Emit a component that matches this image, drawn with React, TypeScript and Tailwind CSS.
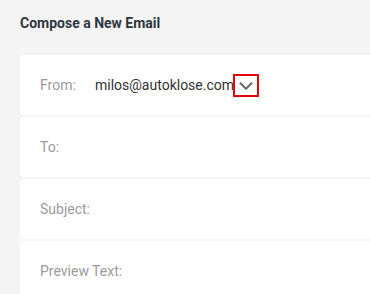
import { ChevronDown } from 'lucide-react';

const fields = ['To:', 'Subject:', 'Preview Text:'];

export default function App() {
  return (
    <div
      className="w-[370px] h-[294px] overflow-hidden bg-[#f4f4f4] pl-5 pt-[14px]"
      style={{ fontFamily: 'Roboto, "Liberation Sans", sans-serif' }}
    >
      <h1 className="text-[14px] font-bold text-[#2f3640] leading-[18px]">Compose a New Email</h1>

      <div className="mt-[23px] flex flex-col gap-[2px] w-[380px]">
        {/* From */}
        <div className="h-[60px] bg-white rounded-[4px] flex items-center pl-5">
          <span className="w-[55px] text-[14px] text-[#9b9b9b]">From:</span>
          <span className="text-[14px] text-[#333]">milos@autoklose.com</span>
          <span className="w-[26px] h-[23px] border-2 border-[#e8000b] flex items-center justify-center -ml-[1px]">
            <ChevronDown size={22} strokeWidth={2.4} className="text-[#6b6f75] mt-[2px]" />
          </span>
        </div>

        {fields.map((label) => (
          <div key={label} className="h-[60px] bg-white rounded-[4px] flex items-center pl-5">
            <span className="text-[14px] text-[#9b9b9b]">{label}</span>
          </div>
        ))}
      </div>
    </div>
  );
}
